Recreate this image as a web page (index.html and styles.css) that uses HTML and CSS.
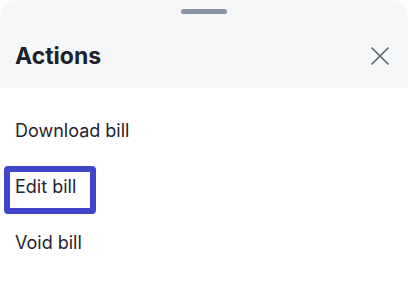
FILE: index.html
```html
<!DOCTYPE html>
<html lang="en">
<head>
<meta charset="utf-8">
<title>Actions</title>
<link rel="stylesheet" href="styles.css">
</head>
<body>
<div class="sheet">
  <div class="sheet-header">
    <div class="handle"></div>
    <div class="title-row">
      <h2 class="title">Actions</h2>
      <button class="close" aria-label="Close">
        <svg width="18" height="18" viewBox="0 0 18 18" fill="none" stroke="#5b6270" stroke-width="1.6" stroke-linecap="round"><path d="M1 1L17 17M17 1L1 17"/></svg>
      </button>
    </div>
  </div>
  <ul class="action-list">
    <li class="action"><span class="action-label">Download bill</span></li>
    <li class="action"><span class="action-label is-focused">Edit bill</span></li>
    <li class="action"><span class="action-label">Void bill</span></li>
  </ul>
</div>
</body>
</html>
```

FILE: styles.css
```css
html, body {
  margin: 0;
  padding: 0;
  background: #ffffff;
}
body {
  font-family: Inter, "Noto Sans", sans-serif;
  color: #1f2430;
}
.sheet {
  width: 408px;
  border-radius: 16px 16px 0 0;
  overflow: hidden;
  background: #ffffff;
}
.sheet-header {
  background: #f6f7f9;
  height: 88px;
  box-sizing: border-box;
  padding-top: 9px;
  display: flex;
  flex-direction: column;
}
.handle {
  width: 46px;
  height: 5px;
  border-radius: 3px;
  background: #8a93a3;
  align-self: center;
}
.title-row {
  margin-top: 28px;
  display: flex;
  align-items: center;
  justify-content: space-between;
  padding: 0 19px 0 15px;
}
.title {
  margin: 0;
  font-size: 23px;
  line-height: 28px;
  font-weight: 700;
  color: #1c212b;
}
.close {
  border: 0;
  background: none;
  padding: 0;
  width: 18px;
  height: 18px;
  display: flex;
}
.action-list {
  list-style: none;
  margin: 0;
  padding: 15px 0 0;
}
.action {
  height: 56px;
  box-sizing: border-box;
  padding: 16px 15px;
  display: flex;
  align-items: flex-start;
  font-size: 18px;
  line-height: 24px;
}
.action-label.is-focused {
  margin: -9px 0 0 -11px;
  padding: 3px 14px 9px 5px;
  border: 6px solid #4046ca;
  border-radius: 4px;
}
```
